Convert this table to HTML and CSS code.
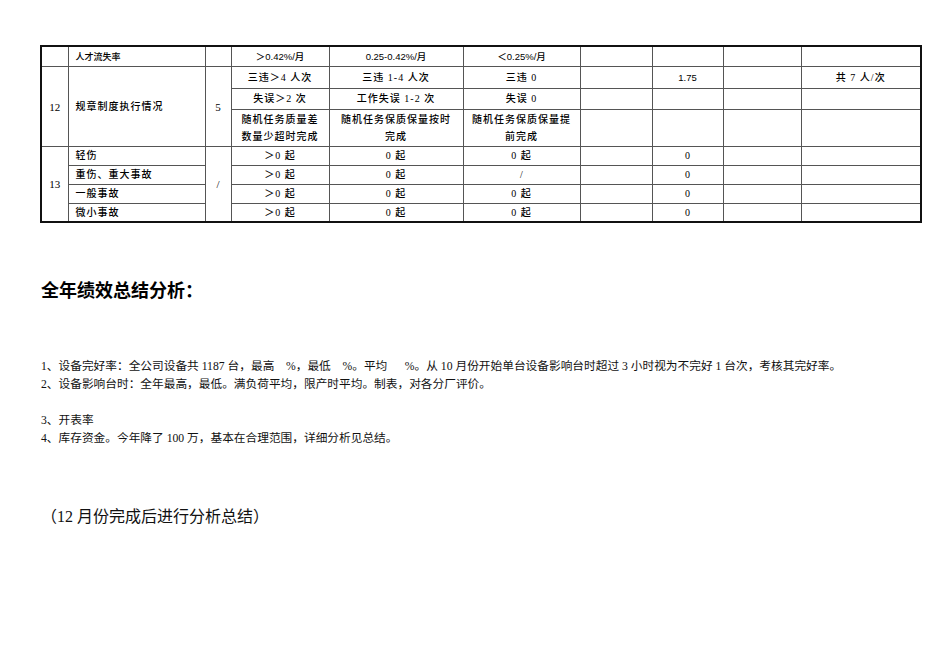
FILE: index.html
```html
<!DOCTYPE html>
<html lang="zh-CN">
<head>
<meta charset="utf-8">
<title>全年绩效总结分析</title>
<link rel="stylesheet" href="styles.css">
</head>
<body>
<div class="page">
  <table class="grid">
    <colgroup>
      <col class="w1"><col class="w2"><col class="w3"><col class="w4"><col class="w5">
      <col class="w6"><col class="w7"><col class="w8"><col class="w9"><col class="w10">
    </colgroup>
    <tbody>
      <tr class="r-first">
        <td></td>
        <td class="lt small">人才流失率</td>
        <td></td>
        <td class="sn">＞0.42%/月</td>
        <td class="sn">0.25-0.42%/月</td>
        <td class="sn">＜0.25%/月</td>
        <td></td><td></td><td></td><td></td>
      </tr>
      <tr class="r22">
        <td rowspan="3" class="num">12</td>
        <td rowspan="3" class="lt sp">规章制度执行情况</td>
        <td rowspan="3" class="num">5</td>
        <td class="sp">三违＞4 人次</td>
        <td class="sp">三违 1-4 人次</td>
        <td class="sp">三违 0</td>
        <td></td>
        <td class="sn">1.75</td>
        <td></td>
        <td class="sp">共 7 人/次</td>
      </tr>
      <tr class="r21">
        <td class="sp">失误＞2 次</td>
        <td class="sp">工作失误 1-2 次</td>
        <td class="sp">失误 0</td>
        <td></td><td></td><td></td><td></td>
      </tr>
      <tr class="r37">
        <td class="sp two">随机任务质量差<br>数量少超时完成</td>
        <td class="sp two">随机任务保质保量按时<br>完成</td>
        <td class="sp two">随机任务保质保量提<br>前完成</td>
        <td></td><td></td><td></td><td></td>
      </tr>
      <tr class="r19">
        <td rowspan="4" class="num">13</td>
        <td class="lt sp">轻伤</td>
        <td rowspan="4" class="num">/</td>
        <td class="sp">＞0 起</td>
        <td class="sp">0 起</td>
        <td class="sp">0 起</td>
        <td></td>
        <td>0</td>
        <td></td><td></td>
      </tr>
      <tr class="r19">
        <td class="lt sp">重伤、重大事故</td>
        <td class="sp">＞0 起</td>
        <td class="sp">0 起</td>
        <td>/</td>
        <td></td>
        <td>0</td>
        <td></td><td></td>
      </tr>
      <tr class="r19">
        <td class="lt sp">一般事故</td>
        <td class="sp">＞0 起</td>
        <td class="sp">0 起</td>
        <td class="sp">0 起</td>
        <td></td>
        <td>0</td>
        <td></td><td></td>
      </tr>
      <tr class="r18">
        <td class="lt sp">微小事故</td>
        <td class="sp">＞0 起</td>
        <td class="sp">0 起</td>
        <td class="sp">0 起</td>
        <td></td>
        <td>0</td>
        <td></td><td></td>
      </tr>
    </tbody>
  </table>

  <h2 class="title">全年绩效总结分析：</h2>

  <div class="notes">
    <p>1、设备完好率：全公司设备共 1187 台，最高&nbsp;&nbsp;&nbsp;&nbsp;%，最低&nbsp;&nbsp;&nbsp;&nbsp;%。平均&nbsp;&nbsp;&nbsp;&nbsp;&nbsp;&nbsp;%。从 10 月份开始单台设备影响台时超过 3 小时视为不完好 1 台次，考核其完好率。</p>
    <p>2、设备影响台时：全年最高，最低。满负荷平均，限产时平均。制表，对各分厂评价。</p>
    <p class="blank">&nbsp;</p>
    <p>3、开表率</p>
    <p>4、库存资金。今年降了 100 万，基本在合理范围，详细分析见总结。</p>
  </div>

  <p class="closing">（12 月份完成后进行分析总结）</p>
</div>
</body>
</html>
```

FILE: styles.css
```css
html, body {
  margin: 0;
  padding: 0;
  background: #ffffff;
  color: #000000;
}

.page {
  padding: 45px 0 0 40px;
}

.grid {
  border-collapse: collapse;
  table-layout: fixed;
  width: 880px;
  border: 2px solid #111111;
  font-family: "Liberation Serif", "Noto Sans CJK SC", serif;
  font-size: 10px;
  font-weight: 500;
  color: #000000;
}

.grid td {
  border: 1px solid #555555;
  padding: 0;
  text-align: center;
  vertical-align: middle;
  line-height: 14px;
  white-space: nowrap;
  overflow: hidden;
}

.w1 { width: 27px; }
.w2 { width: 137px; }
.w3 { width: 26px; }
.w4 { width: 98px; }
.w5 { width: 134px; }
.w6 { width: 117px; }
.w7 { width: 72px; }
.w8 { width: 71px; }
.w9 { width: 78px; }
.w10 { width: 120px; }

.r-first td { height: 19px; }
.r21 td { height: 20px; }
.r22 td { height: 21px; }
.r37 td { height: 36px; }
.r19 td { height: 18px; }
.r18 td { height: 17px; }

.grid td.lt {
  text-align: left;
  padding-left: 7px;
}

.grid td.small {
  font-size: 9px;
}

.grid td.sp {
  letter-spacing: 1px;
}

.grid td.sn {
  font-family: "Liberation Sans", "Noto Sans CJK SC", sans-serif;
  font-size: 9.5px;
}

.grid td.num {
  font-size: 11px;
}

.grid td.two {
  line-height: 17.5px;
}

.title {
  margin: 55px 0 0 1px;
  font-family: "Noto Sans CJK SC", "Liberation Sans", sans-serif;
  font-weight: 700;
  font-size: 18px;
  line-height: 22px;
  color: #000000;
}

.notes {
  margin-top: 58px;
  font-family: "Liberation Serif", "Noto Sans CJK SC", serif;
  font-size: 11.7px;
  line-height: 18px;
  color: #111111;
}

.notes p {
  margin: 0 0 0 1px;
  white-space: nowrap;
}

.closing {
  margin: 59px 0 0 1px;
  font-family: "Liberation Serif", "Noto Sans CJK SC", serif;
  font-size: 16px;
  line-height: 20px;
  color: #111111;
}
```
